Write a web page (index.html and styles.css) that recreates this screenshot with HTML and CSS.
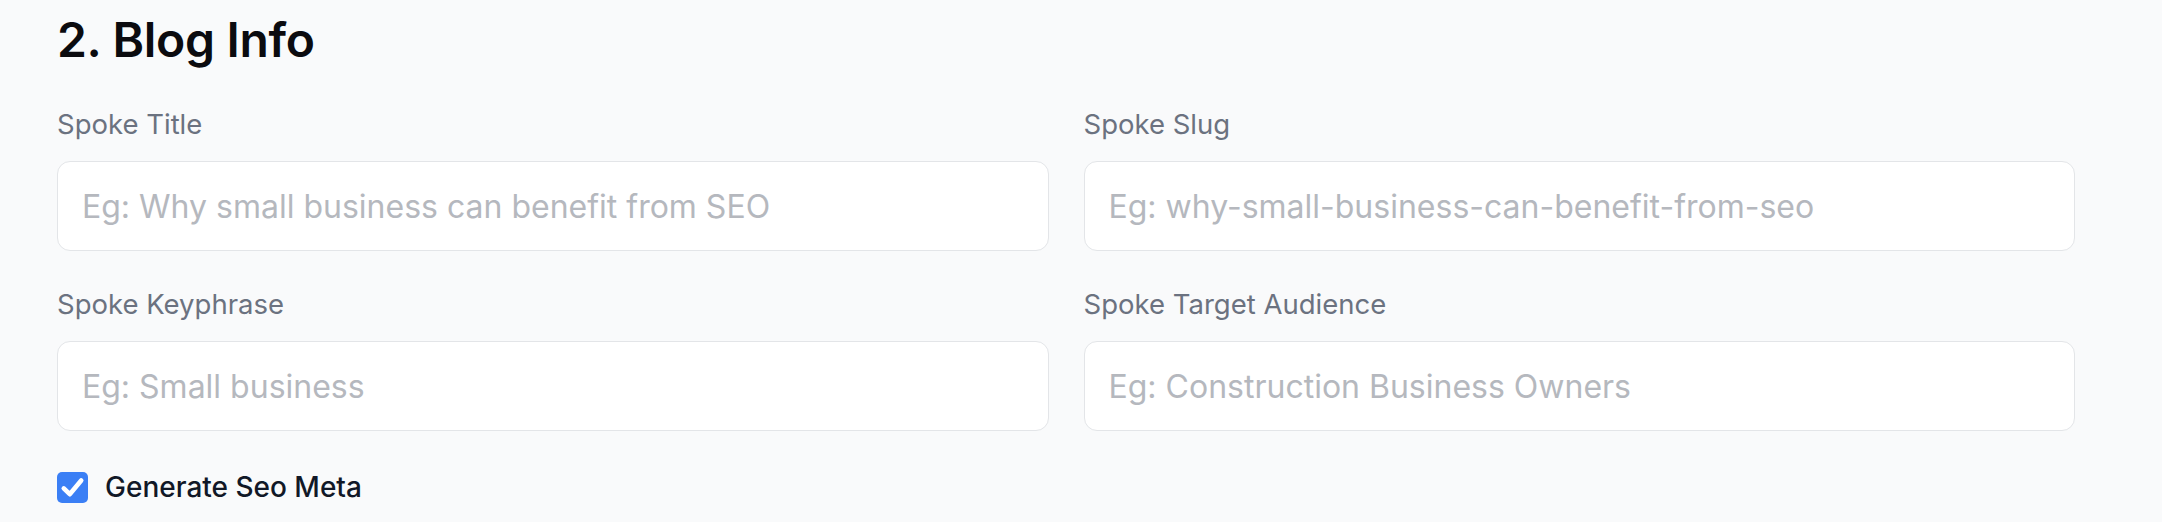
FILE: index.html
```html
<!DOCTYPE html>
<html lang="en">
<head>
<meta charset="utf-8">
<title>Blog Info</title>
<link rel="stylesheet" href="styles.css">
</head>
<body>
<section class="section">
  <h2 class="section-title">2. Blog Info</h2>
  <div class="fields">
    <div class="field">
      <label class="field-label" for="spoke-title">Spoke Title</label>
      <input class="field-input" id="spoke-title" type="text" placeholder="Eg: Why small business can benefit from SEO">
    </div>
    <div class="field">
      <label class="field-label" for="spoke-slug">Spoke Slug</label>
      <input class="field-input" id="spoke-slug" type="text" placeholder="Eg: why-small-business-can-benefit-from-seo">
    </div>
    <div class="field">
      <label class="field-label" for="spoke-keyphrase">Spoke Keyphrase</label>
      <input class="field-input" id="spoke-keyphrase" type="text" placeholder="Eg: Small business">
    </div>
    <div class="field">
      <label class="field-label" for="spoke-audience">Spoke Target Audience</label>
      <input class="field-input" id="spoke-audience" type="text" placeholder="Eg: Construction Business Owners">
    </div>
  </div>
  <label class="check">
    <span class="check-box">
      <svg viewBox="0 0 20 20" width="29" height="29" aria-hidden="true">
        <path d="M4 10.6 L8.1 14.6 L16 5.2" fill="none" stroke="#fff" stroke-width="3.2" stroke-linecap="round" stroke-linejoin="round"/>
      </svg>
    </span>
    <span class="check-label">Generate Seo Meta</span>
  </label>
</section>
</body>
</html>
```

FILE: styles.css
```css
* { box-sizing: border-box; }

html, body {
  margin: 0;
  padding: 0;
  background: #f9fafb;
  font-family: Inter, "Noto Sans", "Liberation Sans", sans-serif;
}

.section {
  width: 2018px;
  margin-left: 57px;
  padding-top: 11px;
  display: flex;
  flex-direction: column;
}

.section-title {
  margin: 0;
  font-size: 48px;
  line-height: 57px;
  font-weight: 600;
  color: #0b0b0f;
  letter-spacing: -0.3px;
}

.fields {
  margin-top: 38px;
  display: grid;
  grid-template-columns: 1fr 1fr;
  column-gap: 35px;
  row-gap: 35px;
}

.field {
  display: flex;
  flex-direction: column;
  gap: 19px;
}

.field-label {
  font-size: 27.5px;
  line-height: 36px;
  font-weight: 400;
  color: #6b7280;
}

.field-input {
  height: 90px;
  width: 100%;
  padding: 0 24px;
  border: 1.5px solid #e3e5e8;
  border-radius: 13px;
  background: #ffffff;
  font-family: inherit;
  font-size: 32px;
  color: #111827;
  outline: none;
}

.field-input::placeholder {
  color: #b5b8be;
}

.check {
  margin-top: 38px;
  display: flex;
  align-items: center;
  gap: 17px;
}

.check-box {
  width: 31px;
  height: 31px;
  border-radius: 5px;
  background: #3b7ff5;
  display: flex;
  align-items: center;
  justify-content: center;
}

.check-label {
  font-size: 28px;
  line-height: 36px;
  font-weight: 500;
  color: #111827;
}
```
